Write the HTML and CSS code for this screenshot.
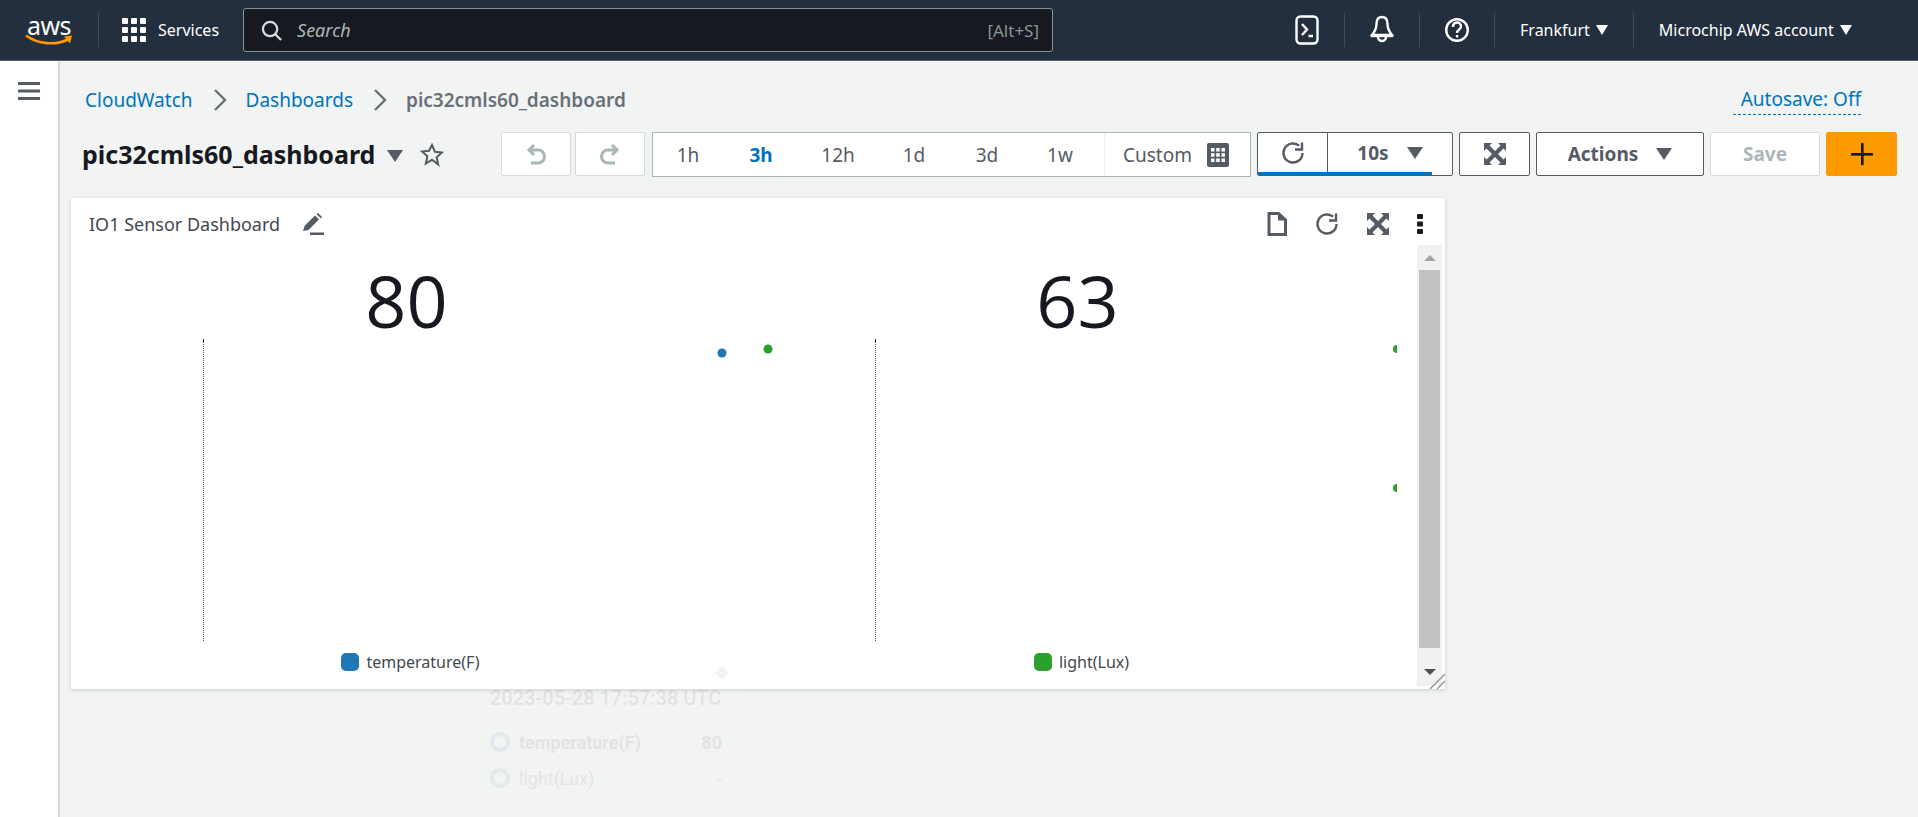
FILE: index.html
```html
<!DOCTYPE html>
<html lang="en">
<head>
    <meta charset="UTF-8">
    <meta name="viewport" content="width=device-width, initial-scale=1.0">
    <title>CloudWatch Dashboard</title>
    <link rel="stylesheet" href="styles.css">
</head>
<body>
    <svg class="icon-defs" aria-hidden="true">
        <symbol id="i-refresh" viewBox="0 0 24 24">
            <path d="M21.5 12a9.5 9.5 0 1 1-3.4-7.3" fill="none" stroke="currentColor" stroke-width="2.4"/>
            <path d="M21 1.5v7h-7" fill="none" stroke="currentColor" stroke-width="2.4"/>
        </symbol>
        <symbol id="i-expand" viewBox="0 0 22 22">
            <path d="M0 0h8L5.500 2.500 11 8l5.500-5.500L14 0h8v8l-2.500-2.500L14 11l5.500 5.500L22 14v8h-8l2.500-2.500L11 14l-5.500 5.500L8 22H0v-8l2.500 2.500L8 11 2.500 5.500 0 8z" fill="currentColor"/>
        </symbol>
    </svg>

    <header class="topbar">
        <a class="aws-logo">
            <span class="aws-word">aws</span>
            <svg class="aws-smile" viewBox="0 0 48 12"><path d="M1 1.500c12 9 30 10 42 4" fill="none" stroke="#f90" stroke-width="2.600"/><path d="M39 2.500l8-1-2 8z" fill="#f90"/></svg>
        </a>
        <span class="top-sep sep-logo"></span>
        <svg class="services-icon" viewBox="0 0 24 24" fill="#fff">
            <rect x="0" y="0" width="6" height="6" rx="1"/><rect x="9" y="0" width="6" height="6" rx="1"/><rect x="18" y="0" width="6" height="6" rx="1"/>
            <rect x="0" y="9" width="6" height="6" rx="1"/><rect x="9" y="9" width="6" height="6" rx="1"/><rect x="18" y="9" width="6" height="6" rx="1"/>
            <rect x="0" y="18" width="6" height="6" rx="1"/><rect x="9" y="18" width="6" height="6" rx="1"/><rect x="18" y="18" width="6" height="6" rx="1"/>
        </svg>
        <span class="services">Services</span>
        <div class="searchbox">
            <svg class="search-icon" viewBox="0 0 22 22" fill="none" stroke="#d5dbdb" stroke-width="2.400"><circle cx="9.500" cy="9.500" r="7.500"/><path d="M15 15l6 6"/></svg>
            <span class="search-text">Search</span>
            <span class="search-key">[Alt+S]</span>
        </div>
        <svg class="top-icon icon-terminal" viewBox="0 0 24 30" fill="none" stroke="#fff" stroke-width="2.400"><rect x="1.500" y="1.500" width="21" height="27" rx="4"/><path d="M7 9l5 5.500-5 5.500M13.500 21H18"/></svg>
        <span class="top-sep"></span>
        <svg class="top-icon icon-bell" viewBox="0 0 24 30" fill="none" stroke="#fff" stroke-width="2.400"><path d="M12 2c-4 0-5.500 3.500-5.500 7 0 5-2 8-4.500 11h20c-2.500-3-4.500-6-4.500-11 0-3.500-1.500-7-5.500-7z"/><path d="M1 21h22" /><path d="M8 22a4 4 0 0 0 8 0"/></svg>
        <span class="top-sep"></span>
        <svg class="top-icon icon-help" viewBox="0 0 24 30" fill="none" stroke="#fff" stroke-width="2.400"><circle cx="12" cy="15" r="10.800"/><path d="M8 12c0-6 8-6 8-.5 0 3-4 3-4 6.500"/><path d="M12 20v2.500"/></svg>
        <span class="top-sep"></span>
        <span class="top-menu">Frankfurt <i class="caret caret-white"></i></span>
        <span class="top-sep"></span>
        <span class="top-menu">Microchip AWS account <i class="caret caret-white"></i></span>
    </header>

    <div class="layout">
        <aside class="sidenav">
            <svg class="burger" viewBox="0 0 22 18" fill="#545b64"><rect width="22" height="3"/><rect y="7.500" width="22" height="3"/><rect y="15" width="22" height="3"/></svg>
        </aside>

        <main class="content">
            <div class="crumbs-row">
                <nav class="crumbs">
                    <a>CloudWatch</a>
                    <svg class="crumb-arrow" viewBox="0 0 14 24" fill="none" stroke="#687078" stroke-width="2.400"><path d="M2 2l10 10L2 22"/></svg>
                    <a>Dashboards</a>
                    <svg class="crumb-arrow" viewBox="0 0 14 24" fill="none" stroke="#687078" stroke-width="2.400"><path d="M2 2l10 10L2 22"/></svg>
                    <span class="crumb-current">pic32cmls60_dashboard</span>
                </nav>
                <a class="autosave">Autosave: Off</a>
            </div>

            <div class="toolbar">
                <h1 class="dash-title">pic32cmls60_dashboard</h1>
                <i class="caret caret-title"></i>
                <svg class="star" viewBox="0 0 24 24" fill="none" stroke="#545b64" stroke-width="2"><path d="M12 2l2.900 6.800 7.100.7-5.400 4.800 1.600 7.200L12 16.800l-6.200 3.700 1.600-7.200L2 8.500l7.100-.7z"/></svg>

                <div class="tools">
                    <button class="btn btn-off btn-history">
                        <svg class="history-icon" viewBox="0 0 20 22" fill="none" stroke="#aab7b8" stroke-width="3"><path d="M8 2L3 7l5 5"/><path d="M3 7h9a6 6 0 0 1 0 13H5"/></svg>
                    </button>
                    <button class="btn btn-off btn-history">
                        <svg class="history-icon" viewBox="0 0 20 22" fill="none" stroke="#aab7b8" stroke-width="3"><path d="M12 2l5 5-5 5"/><path d="M17 7H8a6 6 0 0 0 0 13h7"/></svg>
                    </button>
                    <div class="ranges">
                        <span class="range">1h</span>
                        <span class="range range-active">3h</span>
                        <span class="range">12h</span>
                        <span class="range">1d</span>
                        <span class="range">3d</span>
                        <span class="range">1w</span>
                        <span class="range-custom">Custom
                            <svg class="calendar" viewBox="0 0 22 24"><rect width="22" height="24" rx="2" fill="#545b64"/><g fill="#fff"><rect x="4" y="5" width="3.500" height="3.500"/><rect x="9.200" y="5" width="3.500" height="3.500"/><rect x="14.500" y="5" width="3.500" height="3.500"/><rect x="4" y="10.200" width="3.500" height="3.500"/><rect x="9.200" y="10.200" width="3.500" height="3.500"/><rect x="14.500" y="10.200" width="3.500" height="3.500"/><rect x="4" y="15.500" width="3.500" height="3.500"/><rect x="9.200" y="15.500" width="3.500" height="3.500"/><rect x="14.500" y="15.500" width="3.500" height="3.500"/></g></svg>
                        </span>
                    </div>
                    <div class="refresh-group">
                        <span class="refresh-now"><svg class="icon-24"><use href="#i-refresh"/></svg></span>
                        <span class="refresh-rate">10s <i class="caret caret-tool"></i></span>
                        <span class="refresh-progress"></span>
                    </div>
                    <button class="btn btn-expand"><svg class="icon-22"><use href="#i-expand"/></svg></button>
                    <button class="btn btn-actions">Actions <i class="caret caret-tool"></i></button>
                    <button class="btn btn-off btn-save">Save</button>
                    <button class="btn btn-add">
                        <svg class="plus" viewBox="0 0 22 22" fill="#16191f"><rect x="10" width="2.600" height="22"/><rect y="10" width="22" height="2.600"/></svg>
                    </button>
                </div>
            </div>

            <section class="widget">
                <div class="widget-head">
                    <span class="widget-title">IO1 Sensor Dashboard</span>
                    <svg class="pencil" viewBox="0 0 22 22" fill="#545b64"><path d="M1 18l1.500-5L13 2.500l4 4L6.500 17z"/><path d="M14.500 1l1.500-1 4 4-1 1.500z"/><rect x="8" y="19.500" width="14" height="2.500"/></svg>
                    <div class="widget-actions">
                        <svg class="doc" viewBox="0 0 20 24"><path d="M2 1.500h9.500L18.500 8v14.500H2z" fill="none" stroke="#545b64" stroke-width="3"/><path d="M11 1.500l7.500 7H11z" fill="#545b64"/></svg>
                        <svg class="icon-24"><use href="#i-refresh"/></svg>
                        <svg class="icon-22"><use href="#i-expand"/></svg>
                        <svg class="dots" viewBox="0 0 6 20" fill="#16191f"><rect width="6" height="5" rx="1"/><rect y="7.500" width="6" height="5" rx="1"/><rect y="15" width="6" height="5" rx="1"/></svg>
                    </div>
                </div>
                <div class="widget-body">
                    <div class="chart">
                        <div class="chart-value">80</div>
                        <svg class="plot" viewBox="0 0 671 302">
                            <path d="M132.500 0v3" stroke="#16191f" fill="none"/>
                            <path d="M132.500 3v299" stroke="#545b64" stroke-dasharray="1 1" fill="none"/>
                            <circle cx="651" cy="14" r="4.500" fill="#1f77b4"/>
                        </svg>
                        <div class="legend"><i class="swatch swatch-blue"></i>temperature(F)</div>
                    </div>
                    <div class="chart">
                        <div class="chart-value">63</div>
                        <svg class="plot" viewBox="0 0 671 302">
                            <path d="M133.500 0v3" stroke="#16191f" fill="none"/>
                            <path d="M133.500 3v299" stroke="#545b64" stroke-dasharray="1 1" fill="none"/>
                            <circle cx="26" cy="10" r="4.500" fill="#2ca02c"/>
                            <path d="M655 6a4 4 0 0 0 0 8z" fill="#2ca02c"/>
                            <path d="M655 145a4 4 0 0 0 0 8z" fill="#2ca02c"/>
                        </svg>
                        <div class="legend"><i class="swatch swatch-green"></i>light(Lux)</div>
                    </div>
                    <div class="scrollbar">
                        <i class="scroll-up"></i>
                        <div class="scroll-thumb"></div>
                        <i class="scroll-down"></i>
                    </div>
                </div>
                <svg class="grip" viewBox="0 0 16 16" fill="none" stroke="#9a9a9a" stroke-width="1.500"><path d="M1 16L16 1M8 16l8-8"/></svg>
            </section>

            <div class="tooltip">
                <i class="tooltip-tip"></i>
                <div class="tooltip-time">2023-05-28 17:57:38 UTC</div>
                <div class="tooltip-row tooltip-strong"><i class="ring ring-blue"></i><span>temperature(F)</span><b>80</b></div>
                <div class="tooltip-row"><i class="ring ring-green"></i><span>light(Lux)</span><b class="tooltip-none">-</b></div>
            </div>
        </main>
    </div>
</body>
</html>
```

FILE: styles.css
```css
* {
    box-sizing: border-box;
}
html, body {
    margin: 0;
    height: 817px;
    overflow: hidden;
}
body {
    font-family: "Noto Sans", Arial, sans-serif;
    background-color: #f2f3f3;
    color: #16191f;
}
i {
    font-style: normal;
}
button {
    font-family: inherit;
}
.icon-defs {
    display: none;
}
.icon-24 {
    width: 24px;
    height: 24px;
}
.icon-22 {
    width: 22px;
    height: 22px;
}

/* carets */
.caret {
    display: inline-block;
    width: 0;
    height: 0;
    border-style: solid;
    border-color: transparent;
    border-bottom-width: 0;
}
.caret-white {
    border-width: 10px 6px 0;
    border-top-color: #fff;
    margin-left: 6px;
}
.caret-title {
    border-width: 12px 8px 0;
    border-top-color: #545b64;
    margin-left: 12px;
    margin-top: 3px;
}
.caret-tool {
    border-width: 12px 8px 0;
    border-top-color: #545b64;
}

/* top bar */
.topbar {
    height: 61px;
    background-color: #232f3e;
    border-bottom: 1px solid #545b64;
    display: flex;
    align-items: center;
    color: #fff;
    font-size: 16px;
}
.aws-logo {
    width: 48px;
    margin-left: 25px;
    display: flex;
    flex-direction: column;
    align-items: center;
    color: #fff;
}
.aws-word {
    font-size: 25px;
    line-height: 20px;
    height: 19px;
    letter-spacing: -0.5px;
}
.aws-smile {
    width: 48px;
    height: 12px;
}
.top-sep {
    width: 1px;
    height: 34px;
    background-color: #414d5c;
    margin: 0 25px;
}
.sep-logo {
    margin: 0 25px 0 25px;
}
.services-icon {
    width: 24px;
    height: 24px;
    margin-left: -2px;
}
.services {
    margin-left: 12px;
    font-size: 16px;
}
.searchbox {
    width: 810px;
    height: 44px;
    margin-left: 24px;
    margin-right: 242px;
    background-color: #16191f;
    border: 1px solid #879596;
    border-radius: 3px;
    display: flex;
    align-items: center;
    padding: 0 13px 0 17px;
}
.search-icon {
    width: 21px;
    height: 21px;
}
.search-text {
    margin-left: 15px;
    font-style: italic;
    font-size: 18px;
    color: #aab7b8;
}
.search-key {
    margin-left: auto;
    color: #879596;
    font-size: 17px;
}
.top-icon {
    width: 24px;
    height: 30px;
}
.top-menu {
    display: flex;
    align-items: center;
    white-space: nowrap;
}

/* layout */
.layout {
    display: flex;
    height: 756px;
}
.sidenav {
    width: 60px;
    background-color: #fff;
    border-right: 2px solid #d5dbdb;
    padding: 21px 0 0 18px;
    flex-shrink: 0;
}
.burger {
    width: 22px;
    height: 18px;
    display: block;
}
.content {
    flex: 1;
    position: relative;
    padding: 0 21px 0 11px;
}
.crumbs-row {
    height: 71px;
    display: flex;
    align-items: center;
    padding: 7px 36px 0 14px;
    font-size: 19px;
}
.crumbs {
    display: flex;
    align-items: center;
}
.crumbs a {
    color: #0073bb;
}
.crumb-arrow {
    width: 14px;
    height: 24px;
    margin: 0 19px 0 20px;
}
.crumb-current {
    color: #687078;
    font-weight: 600;
}
.autosave {
    margin-left: auto;
    color: #0073bb;
    padding: 0 0 2px 8px;
    border-bottom: 1px dashed #0073bb;
}
.toolbar {
    display: flex;
    align-items: center;
    height: 45px;
}
.dash-title {
    margin: 0 0 0 11px;
    font-size: 25px;
    font-weight: 700;
    line-height: 45px;
}
.star {
    width: 24px;
    height: 24px;
    margin-left: 17px;
}
.tools {
    margin-left: auto;
    display: flex;
    gap: 6px;
    align-items: flex-start;
}
.btn {
    height: 44px;
    background-color: #fff;
    border: 1px solid #545b64;
    border-radius: 2px;
    color: #545b64;
    font-size: 19px;
    font-weight: 700;
    display: flex;
    align-items: center;
    justify-content: center;
    padding: 0;
    cursor: pointer;
}
.btn-off {
    border-color: #d5dbdb;
    color: #aab7b8;
}
.btn-history {
    width: 70px;
    margin-right: -2px;
}
.history-icon {
    width: 20px;
    height: 22px;
}
.ranges {
    width: 599px;
    height: 45px;
    margin-left: 3px;
    background-color: #fff;
    border: 1px solid #aab7b8;
    display: flex;
    align-items: center;
    font-size: 19px;
    color: #545b64;
    position: relative;
}
.range {
    position: absolute;
    transform: translateX(-50%);
}
.range:nth-child(1) { left: 35px; }
.range:nth-child(2) { left: 108px; }
.range:nth-child(3) { left: 185px; }
.range:nth-child(4) { left: 261px; }
.range:nth-child(5) { left: 334px; }
.range:nth-child(6) { left: 407px; }
.range-active {
    color: #0073bb;
    font-weight: 700;
}
.range-custom {
    margin-left: 451px;
    padding-left: 18px;
    height: 43px;
    border-left: 1px solid #eaeded;
    display: flex;
    align-items: center;
    gap: 15px;
}
.calendar {
    width: 22px;
    height: 24px;
}
.refresh-group {
    width: 196px;
    height: 44px;
    background-color: #fff;
    border: 1px solid #545b64;
    border-radius: 2px;
    display: flex;
    color: #545b64;
    font-size: 19px;
    font-weight: 700;
    position: relative;
    overflow: hidden;
}
.refresh-now {
    width: 70px;
    border-right: 1px solid #545b64;
    display: flex;
    align-items: center;
    justify-content: center;
    padding-bottom: 2px;
}
.refresh-rate {
    flex: 1;
    display: flex;
    align-items: center;
    justify-content: center;
    gap: 18px;
    padding-bottom: 2px;
}
.refresh-progress {
    position: absolute;
    left: 0;
    bottom: 0;
    width: 174px;
    height: 3px;
    background-color: #0073bb;
}
.btn-expand {
    width: 71px;
}
.btn-actions {
    width: 168px;
    gap: 18px;
}
.btn-save {
    width: 110px;
}
.btn-add {
    width: 71px;
    border-color: #f90;
    background-color: #f90;
}
.plus {
    width: 22px;
    height: 22px;
}

/* widget */
.widget {
    width: 1374px;
    height: 491px;
    margin-top: 21px;
    background-color: #fff;
    box-shadow: 0 1px 4px rgba(0, 28, 36, 0.18);
    position: relative;
}
.widget-head {
    height: 47px;
    display: flex;
    align-items: center;
    padding: 4px 22px 0 18px;
}
.widget-title {
    font-size: 18px;
    color: #414750;
}
.pencil {
    width: 22px;
    height: 22px;
    margin-left: 22px;
}
.widget-actions {
    margin-left: auto;
    display: flex;
    align-items: center;
    color: #545b64;
    gap: 28px;
}
.doc {
    width: 20px;
    height: 24px;
}
.dots {
    width: 6px;
    height: 20px;
}
.widget-body {
    display: flex;
    height: 444px;
}
.chart {
    width: 671px;
    display: flex;
    flex-direction: column;
    align-items: center;
}
.chart-value {
    height: 94px;
    font-family: "Open Sans", sans-serif;
    font-size: 72px;
    line-height: 94px;
    padding-top: 8px;
}
.plot {
    width: 671px;
    height: 302px;
    display: block;
}
.legend {
    height: 42px;
    display: flex;
    align-items: center;
    gap: 7px;
    font-size: 16px;
    color: #414750;
    padding-left: 8px;
}
.swatch {
    width: 18px;
    height: 18px;
    border-radius: 5px;
}
.swatch-blue {
    background-color: #1f77b4;
}
.swatch-green {
    background-color: #2ca02c;
}
.scrollbar {
    width: 25px;
    height: 441px;
    margin-left: 4px;
    background-color: #f1f1f1;
    display: flex;
    flex-direction: column;
    align-items: center;
}
.scroll-up {
    width: 0;
    height: 0;
    margin: 10px 0 9px;
    border-style: solid;
    border-width: 0 6px 6px;
    border-color: transparent transparent #a3a3a3;
}
.scroll-thumb {
    width: 21px;
    height: 378px;
    background-color: #c1c1c1;
}
.scroll-down {
    width: 0;
    height: 0;
    margin-top: 21px;
    border-style: solid;
    border-width: 6px 6px 0;
    border-color: #505050 transparent transparent;
}
.grip {
    position: absolute;
    right: 0;
    bottom: 0;
    width: 16px;
    height: 16px;
}

/* tooltip fading out under the widget */
.tooltip {
    position: absolute;
    left: 422px;
    top: 612px;
    width: 263px;
    height: 120px;
    padding: 12px 8px;
    background-color: #fff;
    border-radius: 4px;
    font-family: Roboto, sans-serif;
    opacity: 0.07;
    color: #16191f;
}
.tooltip-tip {
    position: absolute;
    top: -5px;
    right: 18px;
    width: 10px;
    height: 10px;
    background-color: #555;
    transform: rotate(45deg);
}
.tooltip-time {
    font-size: 20px;
    font-weight: 500;
    line-height: 26px;
    margin-bottom: 13px;
    white-space: nowrap;
}
.tooltip-row {
    display: flex;
    align-items: center;
    height: 36px;
    font-size: 18px;
}
.tooltip-row b {
    margin-left: auto;
    margin-right: 15px;
}
.tooltip-row .tooltip-none {
    font-weight: 400;
}
.tooltip-strong span {
    font-weight: 700;
}
.ring {
    width: 20px;
    height: 20px;
    border: 4px solid;
    border-radius: 50%;
    margin-right: 9px;
}
.ring-blue {
    border-color: #1f77b4;
}
.ring-green {
    border-color: #2ca02c;
}
```
